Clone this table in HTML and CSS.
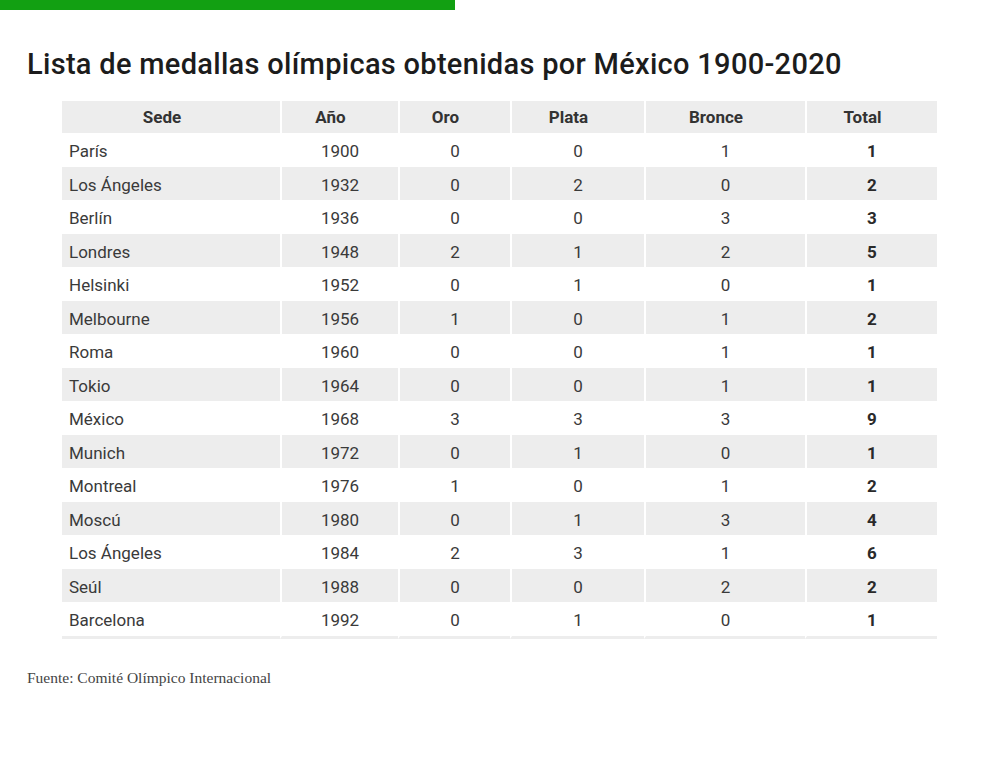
FILE: index.html
```html
<!DOCTYPE html>
<html lang="es">
<head>
<meta charset="utf-8">
<title>Lista de medallas olímpicas obtenidas por México 1900-2020</title>
<link rel="stylesheet" href="styles.css">
</head>
<body>
<div class="topbar"></div>
<h1 class="title">Lista de medallas olímpicas obtenidas por México 1900-2020</h1>
<table class="medals">
  <colgroup>
    <col class="c-sede"><col class="c-ano"><col class="c-oro"><col class="c-plata"><col class="c-bronce"><col class="c-total">
  </colgroup>
  <thead>
    <tr><th>Sede</th><th>Año</th><th>Oro</th><th>Plata</th><th>Bronce</th><th>Total</th></tr>
  </thead>
  <tbody>
    <tr><td>París</td><td>1900</td><td>0</td><td>0</td><td>1</td><td>1</td></tr>
    <tr><td>Los Ángeles</td><td>1932</td><td>0</td><td>2</td><td>0</td><td>2</td></tr>
    <tr><td>Berlín</td><td>1936</td><td>0</td><td>0</td><td>3</td><td>3</td></tr>
    <tr><td>Londres</td><td>1948</td><td>2</td><td>1</td><td>2</td><td>5</td></tr>
    <tr><td>Helsinki</td><td>1952</td><td>0</td><td>1</td><td>0</td><td>1</td></tr>
    <tr><td>Melbourne</td><td>1956</td><td>1</td><td>0</td><td>1</td><td>2</td></tr>
    <tr><td>Roma</td><td>1960</td><td>0</td><td>0</td><td>1</td><td>1</td></tr>
    <tr><td>Tokio</td><td>1964</td><td>0</td><td>0</td><td>1</td><td>1</td></tr>
    <tr><td>México</td><td>1968</td><td>3</td><td>3</td><td>3</td><td>9</td></tr>
    <tr><td>Munich</td><td>1972</td><td>0</td><td>1</td><td>0</td><td>1</td></tr>
    <tr><td>Montreal</td><td>1976</td><td>1</td><td>0</td><td>1</td><td>2</td></tr>
    <tr><td>Moscú</td><td>1980</td><td>0</td><td>1</td><td>3</td><td>4</td></tr>
    <tr><td>Los Ángeles</td><td>1984</td><td>2</td><td>3</td><td>1</td><td>6</td></tr>
    <tr><td>Seúl</td><td>1988</td><td>0</td><td>0</td><td>2</td><td>2</td></tr>
    <tr><td>Barcelona</td><td>1992</td><td>0</td><td>1</td><td>0</td><td>1</td></tr>
  </tbody>
</table>
<p class="source">Fuente: Comité Olímpico Internacional</p>
</body>
</html>
```
FILE: styles.css
```css
html, body {
  margin: 0;
  padding: 0;
  background: #ffffff;
}
body {
  font-family: Roboto, "Liberation Sans", Arial, sans-serif;
  color: #333333;
}
.topbar {
  width: 455px;
  height: 10px;
  background: #12a012;
}
.title {
  margin: 36px 0 0 27px;
  font-size: 29px;
  line-height: 36px;
  font-weight: 500;
  letter-spacing: 0.3px;
  color: #1c1c1c;
}
.medals {
  margin: 19px 0 0 62px;
  width: 875px;
  table-layout: fixed;
  border-collapse: separate;
  border-spacing: 0;
  font-size: 17px;
}
.c-sede { width: 218px; }
.c-ano { width: 118px; }
.c-oro { width: 112px; }
.c-plata { width: 134px; }
.c-bronce { width: 161px; }
.c-total { width: 132px; }
.medals th,
.medals td {
  box-sizing: border-box;
  padding: 0;
  text-align: center;
  border-left: 2px solid #ffffff;
}
.medals th:first-child,
.medals td:first-child {
  border-left: 0;
}
.medals th {
  height: 32px;
  background: #ededed;
  font-weight: 700;
  color: #333333;
  padding-right: 19px;
}
.medals th:first-child {
  padding-right: 18px;
}
.medals td {
  height: 33.5px;
  padding-top: 3px;
  color: #3a3a3a;
}
.medals td:first-child {
  text-align: left;
  padding-left: 7px;
}
.medals td:last-child {
  font-weight: 700;
  color: #2a2a2a;
}
.medals tbody tr:nth-child(even) td {
  background: #ededed;
}
.medals tbody tr:last-child td {
  border-bottom: 3px solid #ededed;
  height: 36.5px;
}
.source {
  margin: 30px 0 0 27px;
  font-family: "Liberation Serif", "Times New Roman", serif;
  font-size: 15.5px;
  color: #444444;
}
```
